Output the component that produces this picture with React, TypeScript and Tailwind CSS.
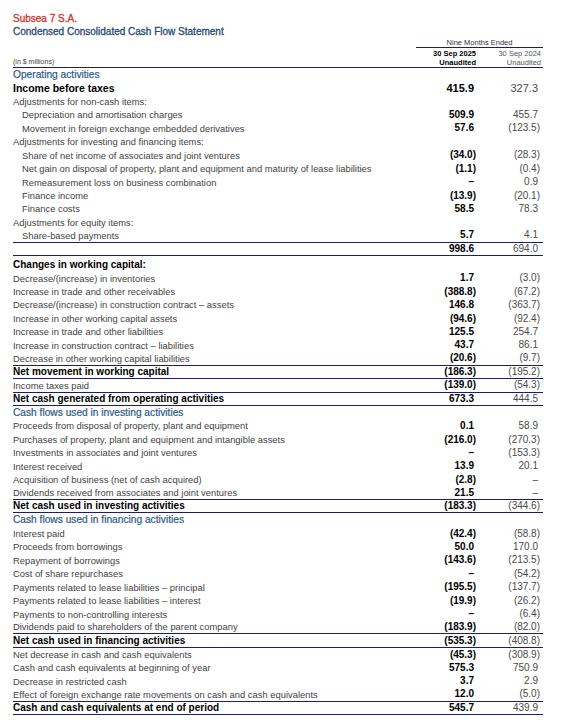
type Row = {
  l?: string;
  a?: string;
  b?: string;
  k?: 'sec' | 'bold' | 'big' | 'norm' | 'ind';
  line?: boolean;
  gap?: boolean;
};

const rows: Row[] = [
  { l: 'Operating activities', k: 'sec' },
  { l: 'Income before taxes', k: 'big', a: '415.9', b: '327.3' },
  { l: 'Adjustments for non-cash items:', k: 'norm' },
  { l: 'Depreciation and amortisation charges', k: 'ind', a: '509.9', b: '455.7' },
  { l: 'Movement in foreign exchange embedded derivatives', k: 'ind', a: '57.6', b: '(123.5)' },
  { l: 'Adjustments for investing and financing items:', k: 'norm' },
  { l: 'Share of net income of associates and joint ventures', k: 'ind', a: '(34.0)', b: '(28.3)' },
  { l: 'Net gain on disposal of property, plant and equipment and maturity of lease liabilities', k: 'ind', a: '(1.1)', b: '(0.4)' },
  { l: 'Remeasurement loss on business combination', k: 'ind', a: '–', b: '0.9' },
  { l: 'Finance income', k: 'ind', a: '(13.9)', b: '(20.1)' },
  { l: 'Finance costs', k: 'ind', a: '58.5', b: '78.3' },
  { l: 'Adjustments for equity items:', k: 'norm' },
  { l: 'Share-based payments', k: 'ind', a: '5.7', b: '4.1', line: true },
  { l: '', k: 'norm', a: '998.6', b: '694.0', line: true },
  { l: 'Changes in working capital:', k: 'bold', gap: true },
  { l: 'Decrease/(increase) in inventories', k: 'norm', a: '1.7', b: '(3.0)' },
  { l: 'Increase in trade and other receivables', k: 'norm', a: '(388.8)', b: '(67.2)' },
  { l: 'Decrease/(increase) in construction contract – assets', k: 'norm', a: '146.8', b: '(363.7)' },
  { l: 'Increase in other working capital assets', k: 'norm', a: '(94.6)', b: '(92.4)' },
  { l: 'Increase in trade and other liabilities', k: 'norm', a: '125.5', b: '254.7' },
  { l: 'Increase in construction contract – liabilities', k: 'norm', a: '43.7', b: '86.1' },
  { l: 'Decrease in other working capital liabilities', k: 'norm', a: '(20.6)', b: '(9.7)', line: true },
  { l: 'Net movement in working capital', k: 'bold', a: '(186.3)', b: '(195.2)', line: true },
  { l: 'Income taxes paid', k: 'norm', a: '(139.0)', b: '(54.3)', line: true },
  { l: 'Net cash generated from operating activities', k: 'bold', a: '673.3', b: '444.5', line: true },
  { l: 'Cash flows used in investing activities', k: 'sec' },
  { l: 'Proceeds from disposal of property, plant and equipment', k: 'norm', a: '0.1', b: '58.9' },
  { l: 'Purchases of property, plant and equipment and intangible assets', k: 'norm', a: '(216.0)', b: '(270.3)' },
  { l: 'Investments in associates and joint ventures', k: 'norm', a: '–', b: '(153.3)' },
  { l: 'Interest received', k: 'norm', a: '13.9', b: '20.1' },
  { l: 'Acquisition of business (net of cash acquired)', k: 'norm', a: '(2.8)', b: '–' },
  { l: 'Dividends received from associates and joint ventures', k: 'norm', a: '21.5', b: '–', line: true },
  { l: 'Net cash used in investing activities', k: 'bold', a: '(183.3)', b: '(344.6)', line: true },
  { l: 'Cash flows used in financing activities', k: 'sec' },
  { l: 'Interest paid', k: 'norm', a: '(42.4)', b: '(58.8)' },
  { l: 'Proceeds from borrowings', k: 'norm', a: '50.0', b: '170.0' },
  { l: 'Repayment of borrowings', k: 'norm', a: '(143.6)', b: '(213.5)' },
  { l: 'Cost of share repurchases', k: 'norm', a: '–', b: '(54.2)' },
  { l: 'Payments related to lease liabilities – principal', k: 'norm', a: '(195.5)', b: '(137.7)' },
  { l: 'Payments related to lease liabilities – interest', k: 'norm', a: '(19.9)', b: '(26.2)' },
  { l: 'Payments to non-controlling interests', k: 'norm', a: '–', b: '(6.4)' },
  { l: 'Dividends paid to shareholders of the parent company', k: 'norm', a: '(183.9)', b: '(82.0)', line: true },
  { l: 'Net cash used in financing activities', k: 'bold', a: '(535.3)', b: '(408.8)', line: true },
  { l: 'Net decrease in cash and cash equivalents', k: 'norm', a: '(45.3)', b: '(308.9)' },
  { l: 'Cash and cash equivalents at beginning of year', k: 'norm', a: '575.3', b: '750.9' },
  { l: 'Decrease in restricted cash', k: 'norm', a: '3.7', b: '2.9' },
  { l: 'Effect of foreign exchange rate movements on cash and cash equivalents', k: 'norm', a: '12.0', b: '(5.0)', line: true },
  { l: 'Cash and cash equivalents at end of period', k: 'bold', a: '545.7', b: '439.9', line: true },
];

function labelClass(k: Row['k']) {
  if (k === 'sec') return 'text-[10.2px] text-[#2a5a88] [-webkit-text-stroke:0.2px]';
  if (k === 'bold') return 'text-[10px] font-bold text-black';
  if (k === 'big') return 'text-[10.5px] font-bold text-black';
  if (k === 'ind') return 'text-[9.4px] text-[#3f3f3f] pl-[9px]';
  return 'text-[9.4px] text-[#3f3f3f]';
}

function Num({ v, cur, big }: { v?: string; cur?: boolean; big?: boolean }) {
  if (!v) return <div />;
  const paren = v.startsWith('(');
  return (
    <div
      className={
        "text-right whitespace-nowrap font-['Liberation_Sans_Narrow','Liberation_Sans',sans-serif] " +
        (big ? 'text-[11px] ' : 'text-[10px] ') +
        (cur ? 'font-bold text-black ' : 'text-[#4a4a4a] ') +
        (paren ? 'pr-0' : 'pr-[2px]')
      }
    >
      {v}
    </div>
  );
}

export default function App() {
  return (
    <div className="w-[561px] h-[726px] bg-white pl-[13px] pr-[18px] pt-[12px] font-['Liberation_Sans',Arial,sans-serif]">
      {/* header */}
      <div className="grid grid-cols-[1fr_127px] border-b border-[#1b1d70]">
        <div className="flex flex-col">
          <div className="text-[10px] leading-[13px] text-[#d6312c] [-webkit-text-stroke:0.3px]">Subsea 7 S.A.</div>
          <div className="text-[10px] leading-[13px] text-[#1f4a78] [-webkit-text-stroke:0.3px]">
            Condensed Consolidated Cash Flow Statement
          </div>
          <div className="mt-auto text-[7px] leading-[10px] text-[#444]">(in $ millions)</div>
        </div>
        <div className="flex flex-col pt-[25px]">
          <div className="h-[11px] border-b border-[#1b1d70] text-center text-[7.5px] leading-[11px] text-[#333]">
            Nine Months Ended
          </div>
          <div className="grid grid-cols-[62px_65px] text-[7.5px] leading-[9px] pt-[1px]">
            <div className="text-right pr-[2px] font-bold text-black">
              30 Sep 2025
              <br />
              Unaudited
            </div>
            <div className="text-right pr-[2px] text-[#555]">
              30 Sep 2024
              <br />
              Unaudited
            </div>
          </div>
        </div>
      </div>

      {/* rows */}
      <div>
        {rows.map((r, i) => (
          <div
            key={i}
            className={
              'grid grid-cols-[1fr_62px_65px] items-center h-[13.45px] leading-none ' +
              (r.line ? 'border-b border-[#1b1d70] ' : '') +
              (r.gap ? 'mt-[2px] ' : '')
            }
          >
            <div className={'whitespace-nowrap leading-none ' + labelClass(r.k)}>{r.l}</div>
            <div className="pr-[2px]">
              <Num v={r.a} cur big={r.k === 'big'} />
            </div>
            <div className="pr-[3px]">
              <Num v={r.b} big={r.k === 'big'} />
            </div>
          </div>
        ))}
      </div>
    </div>
  );
}
